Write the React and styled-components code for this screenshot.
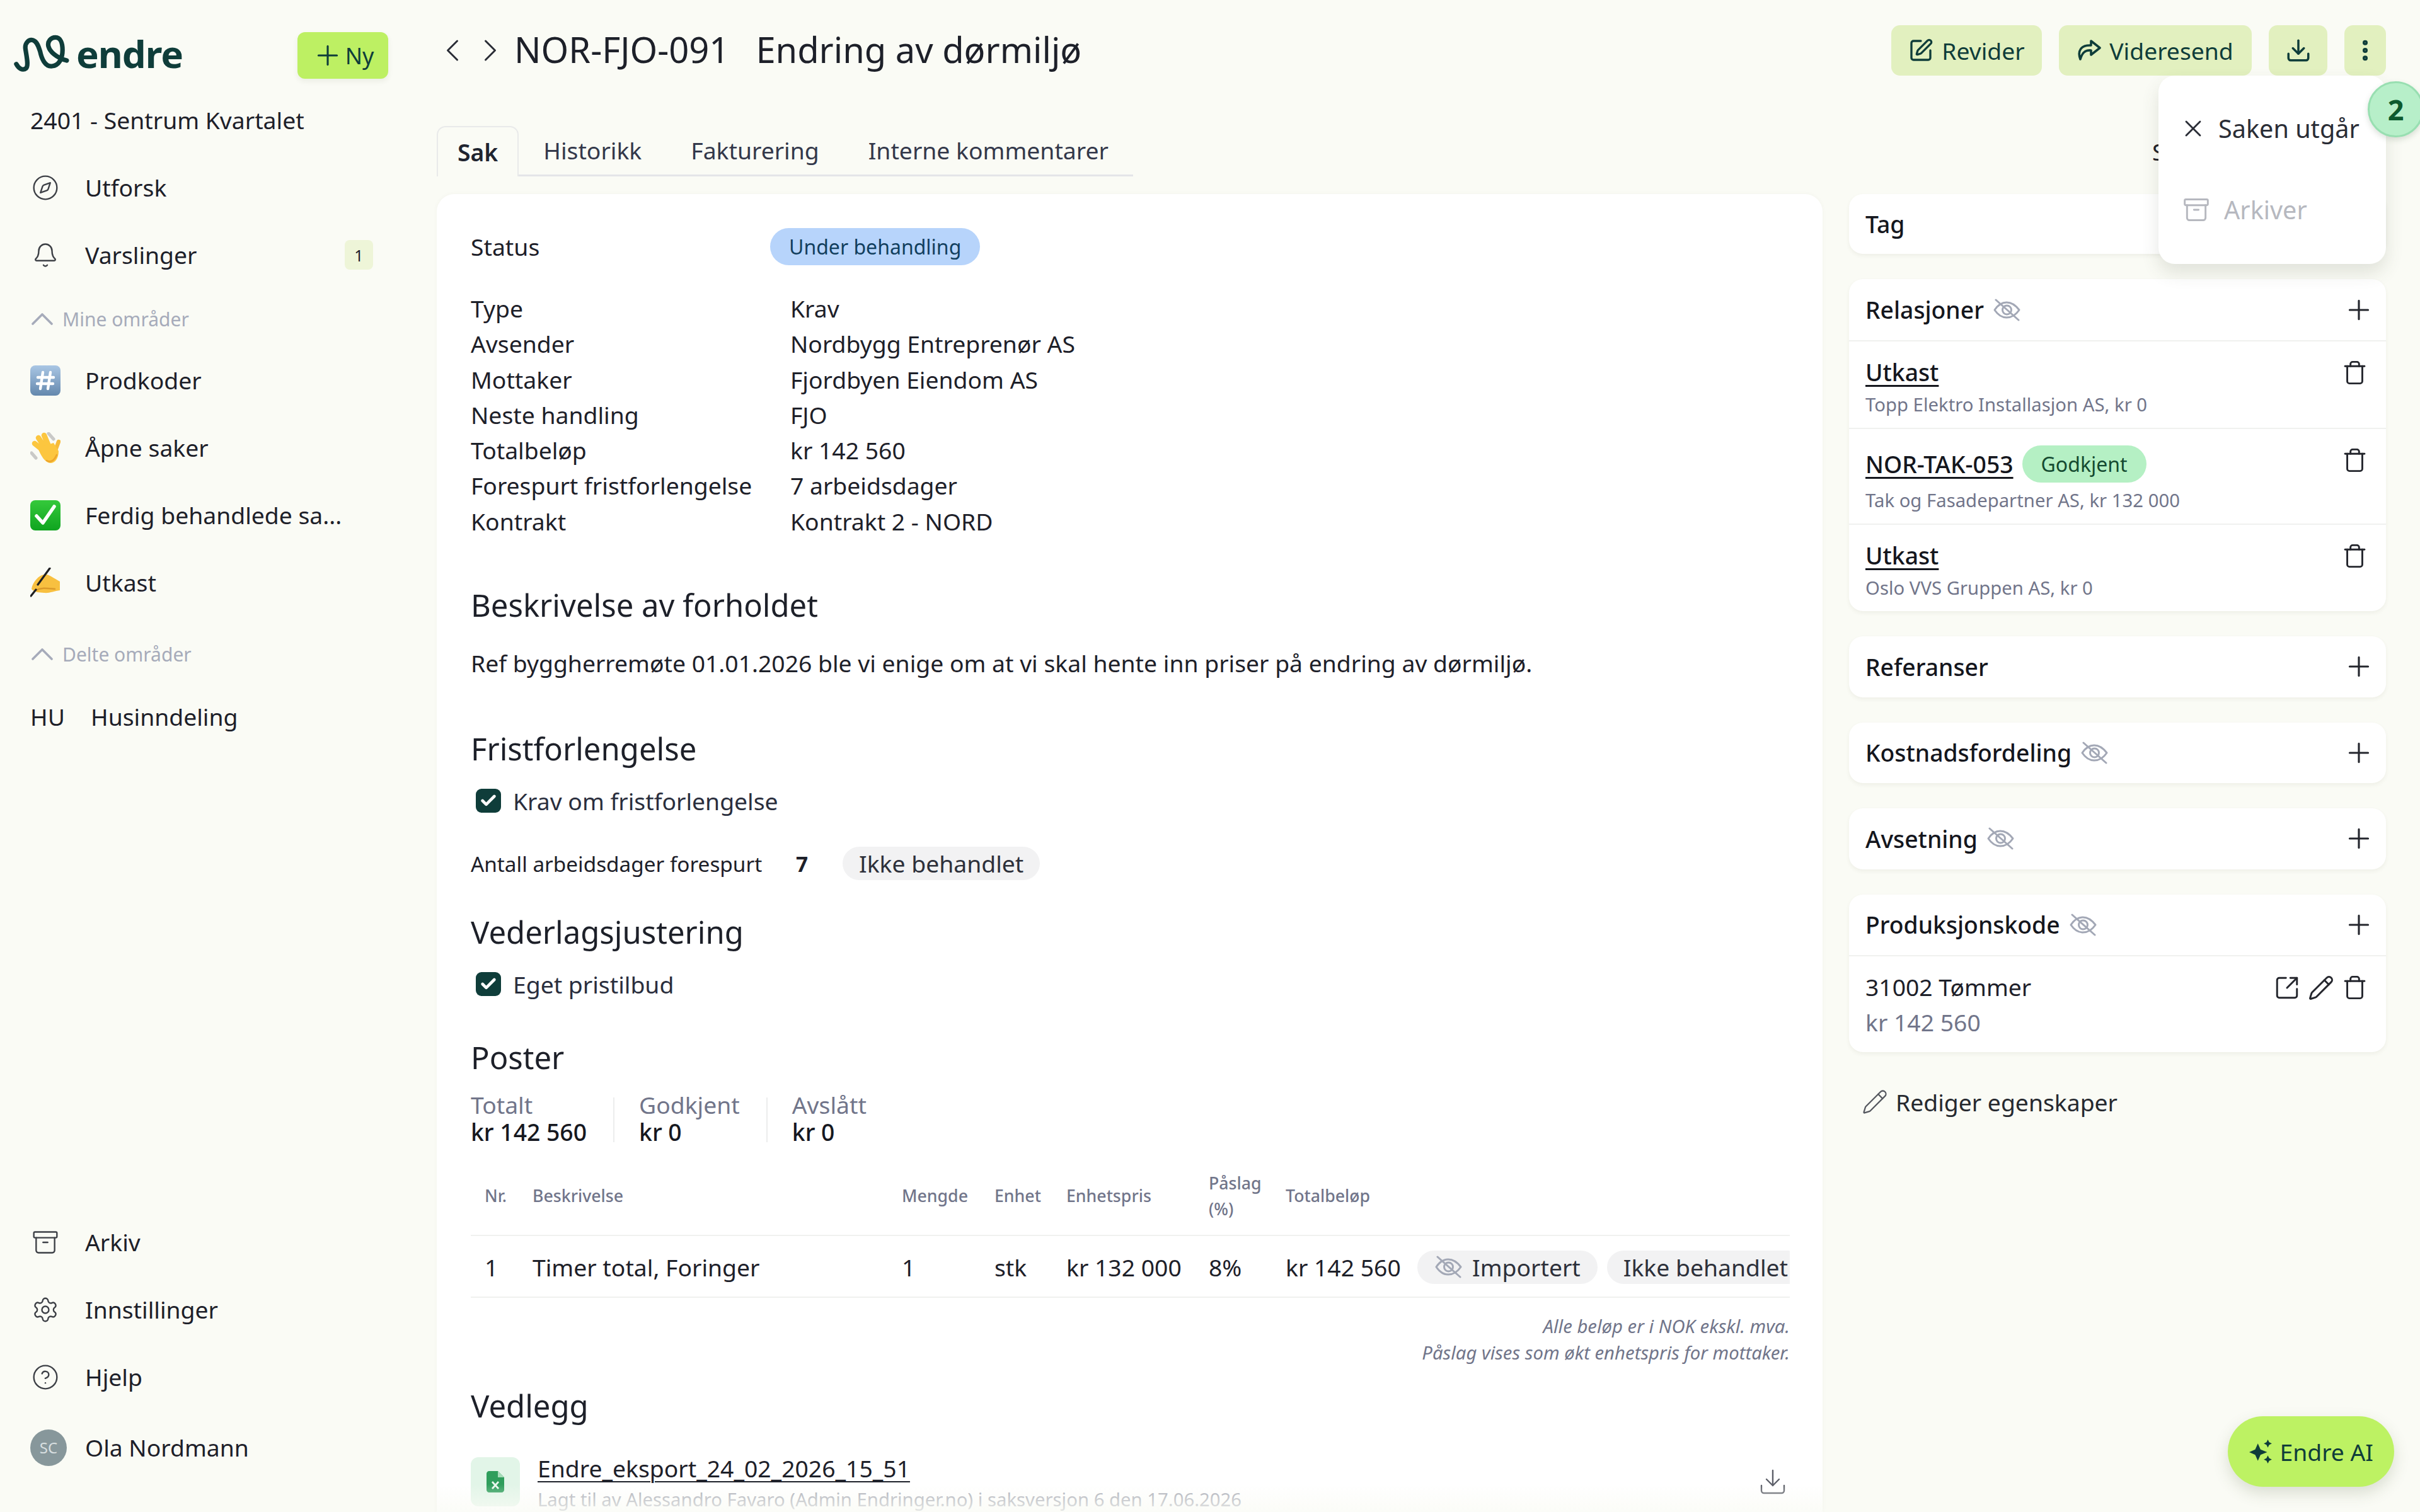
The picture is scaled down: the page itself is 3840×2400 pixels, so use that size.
import React from "react";
import styled, { createGlobalStyle } from "styled-components";
import {
  Archive,
  Bell,
  Check,
  CircleHelp,
  Compass,
  ChevronLeft,
  ChevronRight,
  Download,
  EllipsisVertical,
  Pencil,
  Plus,
  Settings,
  SquareArrowOutUpRight,
  SquarePen,
  Trash,
  X
} from "lucide-react";

const INK = "#1d2029";
const PINE = "#0f3d3a";
const MUTED = "#71758a";
const LINE = "#f0f1ef";
const PAGE = "#fafbf5";

const GlobalStyle = createGlobalStyle`
  html, body {
    margin: 0;
    background: ${PAGE};
    font-family: "Noto Sans", "Open Sans", sans-serif;
    font-size: 37.3px;
    color: ${INK};
  }
  * { box-sizing: border-box; }
`;

const Shell = styled.div`
  position: relative;
  display: flex;
  width: 3840px;
  height: 2400px;
  overflow: hidden;
  background: ${PAGE};
`;

/* sidebar */

const Sidebar = styled.aside`
  width: 692px;
  flex: none;
  display: flex;
  flex-direction: column;
  padding: 51px 100px 44px 48px;
`;

const BrandRow = styled.div`
  display: flex;
  align-items: center;
  justify-content: space-between;
  height: 74px;
  margin: 0 -24px 0 -30px;
`;

const Brand = styled.div`
  display: flex;
  align-items: center;
  gap: 5px;
  margin-top: -7px;
  color: ${PINE};
  font-size: 60px;
  font-weight: 700;
  letter-spacing: -1px;
  line-height: 60px;
`;

const NewButton = styled.div`
  display: flex;
  align-items: center;
  justify-content: center;
  gap: 3px;
  width: 144px;
  height: 74px;
  border-radius: 12px;
  background: #bdf063;
  box-shadow: 0 4px 8px rgba(60, 80, 40, 0.08);
  color: ${PINE};
  font-size: 36px;
`;

const ProjectName = styled.div`
  margin-top: 38px;
  line-height: 56px;
`;

const NavList = styled.nav`
  display: flex;
  flex-direction: column;
  margin-top: ${p => p.$top || 0}px;
`;

const NavItem = styled.div`
  display: flex;
  align-items: center;
  height: 107px;
  white-space: nowrap;
`;

const NavIcon = styled.span`
  display: flex;
  align-items: center;
  justify-content: center;
  width: 48px;
  height: 48px;
  margin-right: 39px;
  color: #3d4046;
`;

const Badge = styled.span`
  display: flex;
  align-items: center;
  justify-content: center;
  width: 45px;
  height: 47px;
  margin-left: auto;
  border-radius: 8px;
  background: #eef5d8;
  font-size: 25px;
`;

const SectionHead = styled.div`
  display: flex;
  align-items: center;
  gap: 15px;
  height: 76px;
  margin-top: ${p => p.$top}px;
  margin-bottom: ${p => p.$bottom}px;
  padding-left: 2px;
  color: #a6abba;
  font-size: 30px;
`;

const Initials = styled.span`
  width: 96px;
`;

const BottomNav = styled(NavList)`
  margin-top: auto;
`;

const UserRow = styled(NavItem)`
  height: 117px;
  gap: 29px;
`;

const Avatar = styled.span`
  display: flex;
  align-items: center;
  justify-content: center;
  width: 58px;
  height: 58px;
  border-radius: 50%;
  background: #87979b;
  color: #d8dfe0;
  font-size: 24px;
`;

/* main column */

const Main = styled.main`
  flex: 1;
  min-width: 0;
  display: flex;
  flex-direction: column;
  padding: 40px 54px 0 1px;
`;

const Header = styled.header`
  display: flex;
  align-items: center;
  height: 80px;
  flex: none;
`;

const Pager = styled.div`
  display: flex;
  margin: 0 8px 0 -5px;
  color: #2a2d36;
`;

const Title = styled.h1`
  margin: 0 0 4px;
  font-size: 56px;
  font-weight: 400;
  line-height: 76px;
  white-space: nowrap;
  span + span {
    margin-left: 42px;
  }
`;

const Actions = styled.div`
  display: flex;
  gap: 27px;
  margin-left: auto;
`;

const ActionButton = styled.div`
  display: flex;
  align-items: center;
  justify-content: center;
  gap: 13px;
  height: 80px;
  width: ${p => p.$width}px;
  border-radius: 14px;
  background: #e2f0bf;
  color: ${PINE};
`;

const TabRow = styled.div`
  display: flex;
  flex: none;
  height: 80px;
  margin-top: 80px;
`;

const Tab = styled.div`
  display: flex;
  align-items: center;
  padding: 0 ${p => (p.$active ? 31 : 39)}px;
  border-style: solid;
  border-color: ${p => (p.$active ? "#e9eaea" : "#e4e5e8")};
  border-width: ${p => (p.$active ? "2px 2px 0" : "0 0 3px")};
  border-radius: ${p => (p.$active ? "14px 14px 0 0" : "0")};
  color: ${p => (p.$active ? "#20242f" : "#33384a")};
  font-weight: ${p => (p.$active ? 600 : 400)};
`;

const HiddenTab = styled.div`
  display: flex;
  align-items: center;
  width: 371px;
  margin-left: auto;
`;

const Body = styled.div`
  flex: 1;
  min-height: 0;
  display: flex;
  gap: 42px;
  margin-top: 28px;
`;

const CaseCard = styled.section`
  position: relative;
  width: 2199px;
  flex: none;
  overflow: hidden;
  padding: 55px 52px 0 54px;
  border-radius: 28px 28px 0 0;
  background: #fff;
  box-shadow: 0 0 6px rgba(90, 100, 70, 0.05);
`;

const BottomFade = styled.div`
  position: absolute;
  left: 0;
  right: 0;
  bottom: 0;
  height: 44px;
  background: linear-gradient(rgba(250, 251, 245, 0), rgba(250, 251, 245, 0.75));
`;

const StatusRow = styled.div`
  display: flex;
  align-items: center;
  height: 59px;
  margin-top: -1px;
`;

const StatusLabel = styled.span`
  width: 475px;
`;

const Pill = styled.span`
  display: inline-flex;
  align-items: center;
  flex: none;
  gap: 15px;
  height: ${p => p.$height || 53}px;
  padding: 0 ${p => p.$pad || 26}px;
  border-radius: 30px;
  background: ${p => p.$bg || "#f2f2f3"};
  color: ${p => p.$color || "#2d303a"};
  font-size: ${p => p.$size || 37.3}px;
  white-space: nowrap;
`;

const Facts = styled.dl`
  display: grid;
  grid-template-columns: 507px 1fr;
  margin: 41px 0 0;
  line-height: 56.3px;
  dd {
    margin: 0;
  }
  dt {
    white-space: nowrap;
  }
`;

const Heading = styled.h2`
  margin: ${p => p.$top}px 0 0;
  font-size: 49px;
  font-weight: 400;
  line-height: 60px;
`;

const Paragraph = styled.p`
  margin: 35px 0 0;
  line-height: 56px;
`;

const CheckRow = styled.div`
  display: flex;
  align-items: center;
  gap: 19px;
  height: 56px;
  margin: 25px 0 0 8px;
  color: #2a2e3d;
`;

const CheckBox = styled.span`
  display: flex;
  align-items: center;
  justify-content: center;
  width: 40px;
  height: 38px;
  border-radius: 9px;
  background: ${PINE};
  color: #fff;
`;

const RequestRow = styled.div`
  display: flex;
  align-items: center;
  margin-top: 45px;
`;

const RequestLabel = styled.span`
  width: 516px;
  font-size: 33.3px;
`;

const RequestValue = styled.b`
  width: 74px;
  font-size: 33.3px;
  font-weight: 700;
`;

const Stats = styled.div`
  display: flex;
  margin-top: 24px;
  line-height: 43px;
`;

const Stat = styled.div`
  padding: 0 ${p => (p.$last ? 0 : 42)}px 0 ${p => (p.$first ? 0 : 41)}px;
  position: relative;
  &::before {
    content: "";
    display: ${p => (p.$first ? "none" : "block")};
    position: absolute;
    left: 0;
    top: 10px;
    bottom: 5px;
    width: 2px;
    background: #eceded;
  }
  span {
    display: block;
    color: ${MUTED};
  }
  b {
    display: block;
    font-weight: 500;
    color: #16181f;
  }
`;

const tableColumns = "98px 586px 147px 114px 226px 122px 209px 591px";

const TableHead = styled.div`
  display: grid;
  grid-template-columns: ${tableColumns};
  align-items: center;
  height: 127px;
  margin-top: 17px;
  border-bottom: 2px solid ${LINE};
  color: ${MUTED};
  font-size: 26.7px;
  font-weight: 500;
  line-height: 41px;
`;

const TableRow = styled.div`
  display: grid;
  grid-template-columns: ${tableColumns};
  align-items: center;
  height: 98px;
  padding-top: 2px;
  border-bottom: 2px solid ${LINE};
  white-space: nowrap;
`;

const NumberCell = styled.div`
  padding-left: 22px;
`;

const PillCell = styled.div`
  display: flex;
  gap: 15px;
  overflow: hidden;
`;

const Notes = styled.div`
  margin-top: 24px;
  color: ${MUTED};
  font-size: 29.3px;
  font-style: italic;
  line-height: 42px;
  text-align: right;
`;

const FileRow = styled.div`
  display: flex;
  align-items: flex-start;
  gap: 28px;
  margin-top: 52px;
`;

const FileIcon = styled.div`
  display: flex;
  align-items: center;
  justify-content: center;
  width: 78px;
  height: 78px;
  flex: none;
  border-radius: 12px;
  background: #e2f5e8;
`;

const FileName = styled.div`
  margin-top: -8px;
  line-height: 52px;
  text-decoration: underline;
  text-underline-offset: 6px;
  text-decoration-thickness: 2px;
`;

const FileMeta = styled.div`
  margin-top: 2px;
  color: #a9acb6;
  font-size: 29.3px;
  line-height: 42px;
  white-space: nowrap;
`;

const FileDownload = styled.div`
  margin: 15px 3px 0 auto;
  color: #5c5f68;
`;

/* right column */

const SideColumn = styled.div`
  width: 852px;
  flex: none;
  display: flex;
  flex-direction: column;
  gap: 40px;
`;

const Panel = styled.section`
  border-radius: 22px;
  background: #fff;
  box-shadow: 0 3px 6px rgba(80, 90, 60, 0.07);
`;

const PanelHead = styled.div`
  display: flex;
  align-items: center;
  gap: 14px;
  height: ${p => p.$height || 96.5}px;
  padding: 0 18px 0 26px;
  font-weight: 500;
  color: #14161d;
  svg.add {
    margin-left: auto;
    color: #24262d;
  }
`;

const PanelRow = styled.div`
  display: flex;
  justify-content: space-between;
  padding: 26px 29px ${p => p.$bottom || 14}px 26px;
  border-top: 2px solid ${LINE};
`;

const RowTitle = styled.div`
  display: flex;
  align-items: center;
  gap: 14px;
  min-height: 46px;
  line-height: 46px;
`;

const RowLink = styled.span`
  text-decoration: underline;
  text-underline-offset: 6px;
  text-decoration-thickness: 3px;
  font-weight: 500;
  color: #14161d;
`;

const RowSub = styled.div`
  margin-top: ${p => p.$top || 5}px;
  color: ${MUTED};
  font-size: ${p => p.$size || 29.3}px;
  line-height: 46px;
`;

const RowTools = styled.div`
  display: flex;
  align-items: flex-start;
  gap: 12px;
  margin-top: 3px;
  color: #24262d;
`;

const EditLink = styled.div`
  display: flex;
  align-items: center;
  gap: 12px;
  height: 56px;
  margin-top: 11px;
  padding-left: 20px;
  color: #26292f;
  svg {
    color: #55585f;
  }
`;

/* floating things */

const Menu = styled.div`
  position: absolute;
  top: 120px;
  right: 54px;
  width: 361px;
  height: 299px;
  display: flex;
  flex-direction: column;
  gap: 73px;
  padding-top: 56px;
  border-radius: 26px;
  background: #fff;
  box-shadow: 0 14px 28px rgba(70, 80, 60, 0.14);
  font-size: 39.6px;
`;

const MenuItem = styled.div`
  display: flex;
  align-items: center;
  gap: ${p => (p.$disabled ? 22 : 18)}px;
  height: 56px;
  padding-left: ${p => (p.$disabled ? 38 : 33)}px;
  color: ${p => (p.$disabled ? "#b6b8bf" : "#2a2d36")};
`;

const StepBadge = styled.div`
  position: absolute;
  top: 129px;
  right: -6px;
  display: flex;
  align-items: center;
  justify-content: center;
  width: 89px;
  height: 89px;
  border: 3px solid #98dfb1;
  border-radius: 50%;
  background: #b7efc9;
  box-shadow: 0 4px 10px rgba(60, 90, 60, 0.18);
  color: #0d5a2e;
  font-size: 45px;
  font-weight: 700;
`;

const AiButton = styled.div`
  position: absolute;
  right: 41px;
  bottom: 40px;
  display: flex;
  align-items: center;
  gap: 10px;
  height: 112px;
  padding: 0 33px 0 34px;
  border-radius: 56px;
  background: #bdf263;
  box-shadow: 0 10px 24px rgba(70, 90, 50, 0.18);
  color: ${PINE};
`;

/* drawings */

const Logo = () => (
  <svg width="98" height="60" viewBox="12 10 80 54" fill="none" stroke={PINE} strokeWidth="6.5" strokeLinecap="round" strokeLinejoin="round">
    <path d="M15 52 C18 58 24 62 29 58 C33 54 29 38 28 30 C27 22 33 16 39 18 C45 20 47 28 49 34 C51 44 56 56 66 55 C76 54 81 44 81 32 C81 22 78 14 71 14 C64 14 59 20 61 27 C63 34 72 43 87 47" />
  </svg>
);

const EyeOff = ({ size = 45 }) => (
  <svg width={size} height={size * 0.8} viewBox="0 0 45 36" fill="none" stroke="#a3a8b6" strokeWidth="3" strokeLinecap="round" strokeLinejoin="round">
    <path d="M3 18 C9 9 15 6 22 6 C30 6 36 10 42 18 C36 27 30 30 22 30 C15 30 9 27 3 18 Z" />
    <circle cx="22.5" cy="18" r="7" />
    <path d="M5 2 L41 34" />
  </svg>
);

const ForwardArrow = () => (
  <svg width="38" height="34" viewBox="0 0 38 34" fill="none" stroke={PINE} strokeWidth="3.6" strokeLinejoin="round" strokeLinecap="round">
    <path d="M22 2 L36 13 L22 24 V17 C13 16 8 20 5 31 C0 18 6 8 22 9 Z" />
  </svg>
);

const Caret = () => (
  <svg width="34" height="20" viewBox="0 0 34 20" fill="none" stroke="#a6abba" strokeWidth="3.6" strokeLinecap="round" strokeLinejoin="round">
    <path d="M2 18 L17 3 L32 18" />
  </svg>
);

const HashEmoji = () => (
  <svg width="48" height="48" viewBox="0 0 48 48">
    <defs>
      <linearGradient id="keycap" x1="0" y1="0" x2="0" y2="1">
        <stop offset="0" stopColor="#a9c6e4" />
        <stop offset="1" stopColor="#6488ad" />
      </linearGradient>
    </defs>
    <rect width="48" height="48" rx="8" fill="url(#keycap)" />
    <path d="M20 11 L16 37 M32 11 L28 37 M12 19 H37 M11 29 H36" stroke="#fff" strokeWidth="4.4" strokeLinecap="round" />
  </svg>
);

const WaveEmoji = () => (
  <svg width="48" height="50" viewBox="0 0 48 50" fill="none" strokeLinecap="round">
    <path d="M2 33 L9 41 M29 2 L37 11" stroke="#c9c9c7" strokeWidth="5" />
    <path d="M22 30 L7 18 M24 26 L13 9 M30 24 L22 5" stroke="#fcc63f" strokeWidth="8.5" />
    <path d="M38 34 L45 15" stroke="#f6bb3b" strokeWidth="6.5" />
    <path d="M12 25 L37 17 L45 30 C45 42 39 49 32 49 C24 49 17 38 12 25 Z" fill="#fcc63f" />
    <path d="M26 45 C32 49 38 45 42 36" stroke="#eda52c" strokeWidth="2.6" />
  </svg>
);

const CheckEmoji = () => (
  <svg width="48" height="48" viewBox="0 0 48 48">
    <defs>
      <linearGradient id="tick" x1="0" y1="0" x2="0" y2="1">
        <stop offset="0" stopColor="#35c93b" />
        <stop offset="1" stopColor="#0fa41f" />
      </linearGradient>
    </defs>
    <rect width="48" height="48" rx="8" fill="url(#tick)" />
    <path d="M10 25 L20 36 L38 10" fill="none" stroke="#fff" strokeWidth="5.5" strokeLinecap="round" strokeLinejoin="round" />
  </svg>
);

const WritingEmoji = () => (
  <svg width="48" height="48" viewBox="0 0 48 48" fill="none">
    <path d="M2 34 C4 22 14 12 22 11 C28 9 36 16 47 22 L47 36 C38 37 30 41 22 40 C14 39 8 40 2 34 Z" fill="#f8c040" />
    <path d="M9 36 C18 31 28 33 40 34" stroke="#dc9a2a" strokeWidth="2.5" />
    <path d="M1 45 L9 35 M12 27 L31 1" stroke="#1f2022" strokeWidth="3.2" strokeLinecap="round" />
  </svg>
);

const SheetIcon = () => (
  <svg width="28" height="34" viewBox="0 0 28 34">
    <path d="M4 0 H18 L28 10 V30 C28 32 26 34 24 34 H4 C2 34 0 32 0 30 V4 C0 2 2 0 4 0 Z" fill="#2f9e5c" />
    <path d="M18 0 V10 H28 Z" fill="#a7dcb9" />
    <path d="M9 17 L19 28 M19 17 L9 28" stroke="#e8f7ed" strokeWidth="2.8" />
  </svg>
);

const Sparkles = () => (
  <svg width="38" height="38" viewBox="0 0 36 36" fill={PINE}>
    <path d="M13 6 L17 15 L27 19 L17 23 L13 32 L9 23 L0 19 L9 15 Z" />
    <path d="M28 0 L30 4 L34 6 L30 8 L28 12 L26 8 L22 6 L26 4 Z" />
    <path d="M28 24 L30 28 L34 30 L30 32 L28 36 L26 32 L22 30 L26 28 Z" />
  </svg>
);

const facts = [
  ["Type", "Krav"],
  ["Avsender", "Nordbygg Entreprenør AS"],
  ["Mottaker", "Fjordbyen Eiendom AS"],
  ["Neste handling", "FJO"],
  ["Totalbeløp", "kr 142 560"],
  ["Forespurt fristforlengelse", "7 arbeidsdager"],
  ["Kontrakt", "Kontrakt 2 - NORD"]
];

const RemoveIcon = () => <Trash size={41} strokeWidth={1.7} />;
const AddIcon = () => <Plus className="add" size={50} strokeWidth={1.5} />;

const Checked = ({ children }) => (
  <CheckRow>
    <CheckBox>
      <Check size={28} strokeWidth={4} />
    </CheckBox>
    {children}
  </CheckRow>
);

const App = () => (
  <Shell>
    <GlobalStyle />
    <Sidebar>
      <BrandRow>
        <Brand>
          <Logo />
          endre
        </Brand>
        <NewButton>
          <Plus size={50} strokeWidth={1.5} />
          Ny
        </NewButton>
      </BrandRow>
      <ProjectName>2401 - Sentrum Kvartalet</ProjectName>
      <NavList $top={25}>
        <NavItem>
          <NavIcon><Compass size={44} strokeWidth={1.3} /></NavIcon>
          Utforsk
        </NavItem>
        <NavItem>
          <NavIcon><Bell size={42} strokeWidth={1.4} /></NavIcon>
          Varslinger
          <Badge>1</Badge>
        </NavItem>
      </NavList>
      <SectionHead $top={10} $bottom={6}><Caret />Mine områder</SectionHead>
      <NavList>
        <NavItem><NavIcon><HashEmoji /></NavIcon>Prodkoder</NavItem>
        <NavItem><NavIcon><WaveEmoji /></NavIcon>Åpne saker</NavItem>
        <NavItem><NavIcon><CheckEmoji /></NavIcon>Ferdig behandlede sa...</NavItem>
        <NavItem><NavIcon><WritingEmoji /></NavIcon>Utkast</NavItem>
      </NavList>
      <SectionHead $top={22} $bottom={8}><Caret />Delte områder</SectionHead>
      <NavList>
        <NavItem><Initials>HU</Initials>Husinndeling</NavItem>
      </NavList>
      <BottomNav>
        <NavItem>
          <NavIcon><Archive size={44} strokeWidth={1.3} /></NavIcon>
          Arkiv
        </NavItem>
        <NavItem>
          <NavIcon><Settings size={44} strokeWidth={1.3} /></NavIcon>
          Innstillinger
        </NavItem>
        <NavItem>
          <NavIcon><CircleHelp size={44} strokeWidth={1.3} /></NavIcon>
          Hjelp
        </NavItem>
        <UserRow>
          <Avatar>SC</Avatar>
          Ola Nordmann
        </UserRow>
      </BottomNav>
    </Sidebar>

    <Main>
      <Header>
        <Pager>
          <ChevronLeft size={60} strokeWidth={1.2} />
          <ChevronRight size={60} strokeWidth={1.2} />
        </Pager>
        <Title>
          <span>NOR-FJO-091</span>
          <span>Endring av dørmiljø</span>
        </Title>
        <Actions>
          <ActionButton $width={239}>
            <SquarePen size={40} strokeWidth={2} />
            Revider
          </ActionButton>
          <ActionButton $width={306}>
            <ForwardArrow />
            Videresend
          </ActionButton>
          <ActionButton $width={93}>
            <Download size={42} strokeWidth={2} />
          </ActionButton>
          <ActionButton $width={66}>
            <EllipsisVertical size={42} strokeWidth={2.6} />
          </ActionButton>
        </Actions>
      </Header>

      <TabRow>
        <Tab $active>Sak</Tab>
        <Tab>Historikk</Tab>
        <Tab>Fakturering</Tab>
        <Tab>Interne kommentarer</Tab>
        <HiddenTab>S</HiddenTab>
      </TabRow>

      <Body>
        <CaseCard>
          <StatusRow>
            <StatusLabel>Status</StatusLabel>
            <Pill $bg="#b7d4fb" $color="#123f5e" $size={32} $height={59} $pad={30}>Under behandling</Pill>
          </StatusRow>
          <Facts>
            {facts.map(([label, value]) => (
              <React.Fragment key={label}>
                <dt>{label}</dt>
                <dd>{value}</dd>
              </React.Fragment>
            ))}
          </Facts>

          <Heading $top={74}>Beskrivelse av forholdet</Heading>
          <Paragraph>Ref byggherremøte 01.01.2026 ble vi enige om at vi skal hente inn priser på endring av dørmiljø.</Paragraph>

          <Heading $top={77}>Fristforlengelse</Heading>
          <Checked>Krav om fristforlengelse</Checked>
          <RequestRow>
            <RequestLabel>Antall arbeidsdager forespurt</RequestLabel>
            <RequestValue>7</RequestValue>
            <Pill>Ikke behandlet</Pill>
          </RequestRow>

          <Heading $top={52}>Vederlagsjustering</Heading>
          <Checked>Eget pristilbud</Checked>

          <Heading $top={58}>Poster</Heading>
          <Stats>
            <Stat $first>
              <span>Totalt</span>
              <b>kr 142 560</b>
            </Stat>
            <Stat>
              <span>Godkjent</span>
              <b>kr 0</b>
            </Stat>
            <Stat $last>
              <span>Avslått</span>
              <b>kr 0</b>
            </Stat>
          </Stats>

          <TableHead>
            <NumberCell>Nr.</NumberCell>
            <div>Beskrivelse</div>
            <div>Mengde</div>
            <div>Enhet</div>
            <div>Enhetspris</div>
            <div>Påslag<br />(%)</div>
            <div>Totalbeløp</div>
            <div />
          </TableHead>
          <TableRow>
            <NumberCell>1</NumberCell>
            <div>Timer total, Foringer</div>
            <div>1</div>
            <div>stk</div>
            <div>kr 132 000</div>
            <div>8%</div>
            <div>kr 142 560</div>
            <PillCell>
              <Pill $pad={27}><EyeOff />Importert</Pill>
              <Pill>Ikke behandlet</Pill>
            </PillCell>
          </TableRow>
          <Notes>
            Alle beløp er i NOK ekskl. mva.
            <br />
            Påslag vises som økt enhetspris for mottaker.
          </Notes>

          <Heading $top={33}>Vedlegg</Heading>
          <FileRow>
            <FileIcon><SheetIcon /></FileIcon>
            <div>
              <FileName>Endre_eksport_24_02_2026_15_51</FileName>
              <FileMeta>Lagt til av Alessandro Favaro (Admin Endringer.no) i saksversjon 6 den 17.06.2026</FileMeta>
            </div>
            <FileDownload><Download size={48} strokeWidth={1.2} /></FileDownload>
          </FileRow>
          <BottomFade />
        </CaseCard>

        <SideColumn>
          <Panel>
            <PanelHead $height={95}>Tag</PanelHead>
          </Panel>

          <Panel>
            <PanelHead $height={97}>Relasjoner <EyeOff /><AddIcon /></PanelHead>
            <PanelRow>
              <div>
                <RowTitle><RowLink>Utkast</RowLink></RowTitle>
                <RowSub>Topp Elektro Installasjon AS, kr 0</RowSub>
              </div>
              <RowTools><RemoveIcon /></RowTools>
            </PanelRow>
            <PanelRow>
              <div>
                <RowTitle>
                  <RowLink>NOR-TAK-053</RowLink>
                  <Pill $bg="#b5f0c4" $color="#144a30" $size={32} $height={59} $pad={30}>Godkjent</Pill>
                </RowTitle>
                <RowSub>Tak og Fasadepartner AS, kr 132 000</RowSub>
              </div>
              <RowTools><RemoveIcon /></RowTools>
            </PanelRow>
            <PanelRow>
              <div>
                <RowTitle><RowLink>Utkast</RowLink></RowTitle>
                <RowSub>Oslo VVS Gruppen AS, kr 0</RowSub>
              </div>
              <RowTools><RemoveIcon /></RowTools>
            </PanelRow>
          </Panel>

          <Panel>
            <PanelHead>Referanser<AddIcon /></PanelHead>
          </Panel>
          <Panel>
            <PanelHead>Kostnadsfordeling <EyeOff /><AddIcon /></PanelHead>
          </Panel>
          <Panel>
            <PanelHead>Avsetning <EyeOff /><AddIcon /></PanelHead>
          </Panel>

          <Panel>
            <PanelHead>Produksjonskode <EyeOff /><AddIcon /></PanelHead>
            <PanelRow $bottom={24}>
              <div>
                <RowTitle>31002 Tømmer</RowTitle>
                <RowSub $size={37.3} $top={10}>kr 142 560</RowSub>
              </div>
              <RowTools>
                <SquareArrowOutUpRight size={42} strokeWidth={1.7} />
                <Pencil size={42} strokeWidth={1.7} />
                <RemoveIcon />
              </RowTools>
            </PanelRow>
          </Panel>

          <EditLink>
            <Pencil size={42} strokeWidth={1.3} />
            Rediger egenskaper
          </EditLink>
        </SideColumn>
      </Body>
    </Main>

    <Menu>
      <MenuItem><X size={44} strokeWidth={1.5} />Saken utgår</MenuItem>
      <MenuItem $disabled><Archive size={44} strokeWidth={1.6} />Arkiver</MenuItem>
    </Menu>
    <StepBadge>2</StepBadge>
    <AiButton><Sparkles />Endre AI</AiButton>
  </Shell>
);

export default App;
